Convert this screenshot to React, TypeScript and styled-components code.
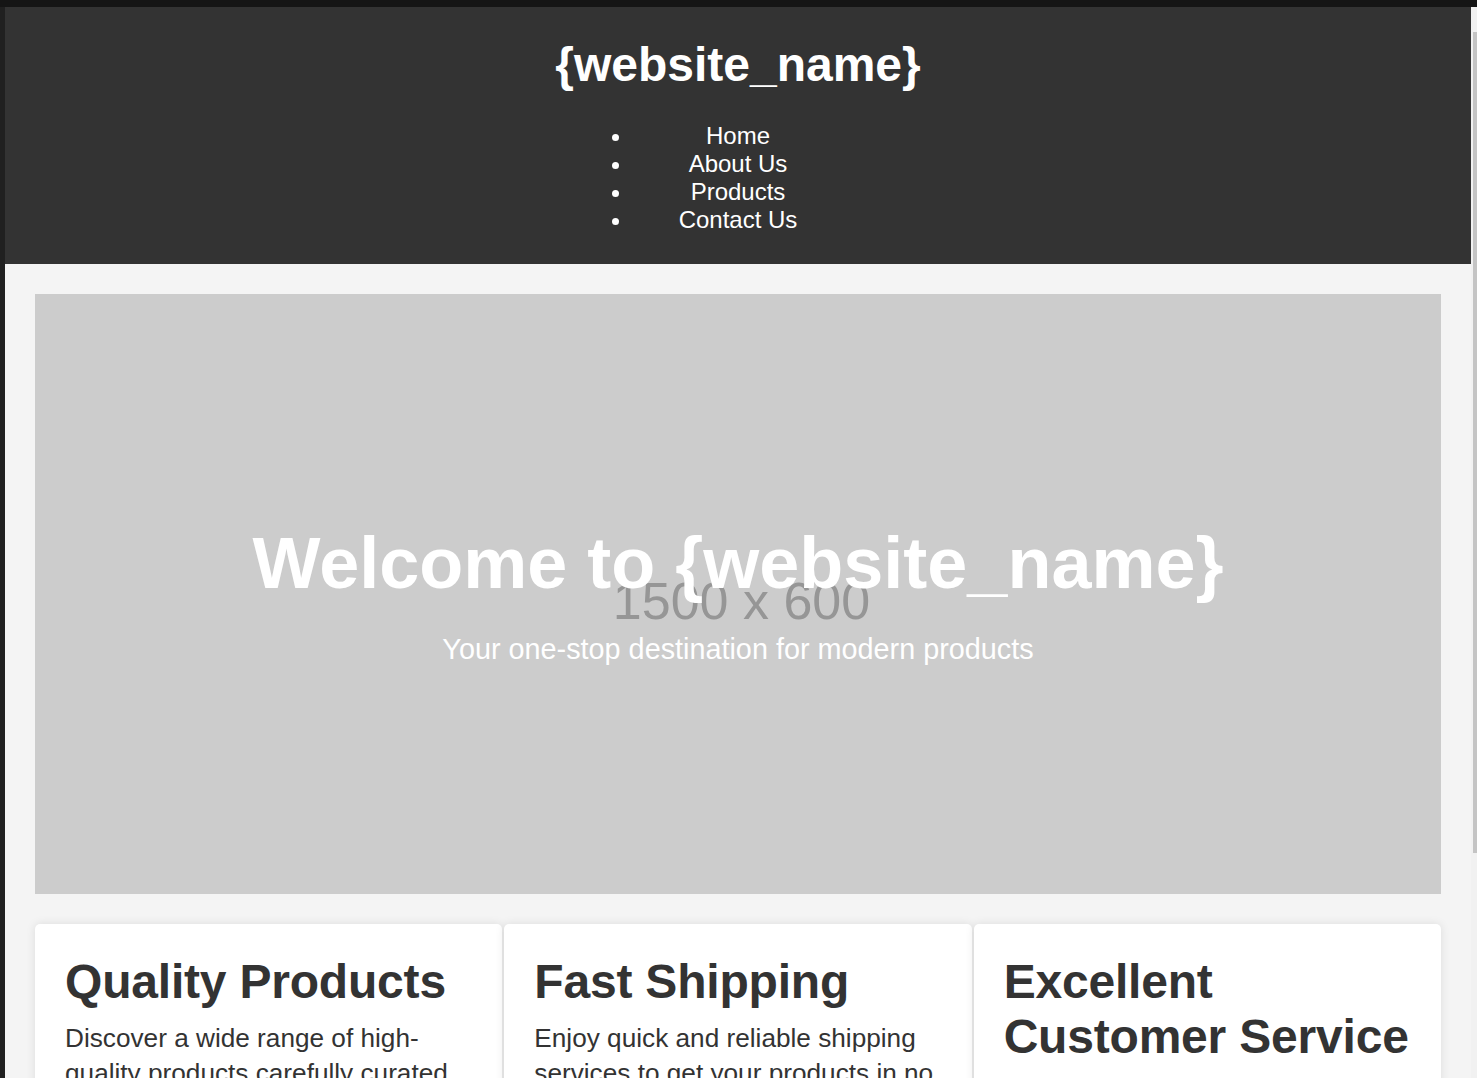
import React from "react";
import styled, { createGlobalStyle } from "styled-components";

const GlobalStyle = createGlobalStyle`
  html, body {
    margin: 0;
    padding: 0;
    background: #151515;
  }
  body {
    font-family: "Liberation Sans", Arial, Helvetica, sans-serif;
  }
  * {
    box-sizing: border-box;
  }
`;

const Screen = styled.div`
  height: 1078px;
  padding-top: 7px;
  background: #151515;
  display: flex;
  flex-direction: column;
  overflow: hidden;
`;

const Window = styled.div`
  flex: 1;
  min-height: 0;
  display: flex;
  border-left: 5px solid #202020;
`;

const Page = styled.div`
  flex: 1;
  min-width: 0;
  overflow: hidden;
  background: #f4f4f4;
  color: #333;
`;

const ScrollRail = styled.div`
  width: 6px;
  flex: none;
  background: #f1f1f1;
  padding-top: 25px;
`;

const ScrollThumb = styled.div`
  height: 821px;
  margin-left: 2px;
  background: #c4c4c4;
`;

const Header = styled.header`
  background: #333;
  color: #fff;
  text-align: center;
  padding: 30px 0 30px;
`;

const SiteTitle = styled.h1`
  margin: 0 0 30px;
  font-size: 48px;
  font-weight: 700;
  line-height: normal;
`;

const NavList = styled.ul`
  list-style: disc outside;
  width: 210px;
  margin: 0 auto;
  padding: 0;
`;

const NavItem = styled.li`
  font-size: 24px;
  line-height: normal;
  text-align: center;
`;

const NavLink = styled.a`
  color: #fff;
  text-decoration: none;
`;

const Main = styled.main`
  padding: 30px;
  background: #f4f4f4;
`;

const Hero = styled.section`
  height: 600px;
  background: #ccc;
  display: grid;
  place-items: center;
`;

const Placeholder = styled.span`
  grid-area: 1 / 1;
  padding: 14px 0 0 7px;
  font-size: 52px;
  line-height: normal;
  color: #969696;
`;

const HeroContent = styled.div`
  grid-area: 1 / 1;
  text-align: center;
  color: #fff;
`;

const HeroTitle = styled.h2`
  margin: 0 0 29px;
  font-size: 72px;
  font-weight: 700;
  line-height: normal;
`;

const HeroText = styled.p`
  margin: 0;
  font-size: 28.8px;
  line-height: normal;
`;

const Features = styled.section`
  margin-top: 30px;
  display: grid;
  grid-template-columns: repeat(3, 1fr);
  gap: 2px;
`;

const Card = styled.article`
  background: #fff;
  border-radius: 5px;
  padding: 30px;
  box-shadow: 0 0 10px rgba(0, 0, 0, 0.1);
  color: #333;
`;

const CardTitle = styled.h3`
  margin: 0 0 12px;
  font-size: 48px;
  font-weight: 700;
  line-height: normal;
  letter-spacing: -0.2px;
`;

const CardText = styled.p`
  margin: 0;
  font-size: 26.2px;
  line-height: 35px;
`;

const Footer = styled.footer`
  background: #333;
  color: #fff;
  text-align: center;
  padding: 20px;
  font-size: 18px;
`;

const navItems = ["Home", "About Us", "Products", "Contact Us"];

const features = [
  {
    title: "Quality Products",
    text: "Discover a wide range of high-quality products carefully curated to meet your needs.",
  },
  {
    title: "Fast Shipping",
    text: "Enjoy quick and reliable shipping services to get your products in no time.",
  },
  {
    title: "Excellent Customer Service",
    text: "Our dedicated support team is here to assist you with any questions or concerns.",
  },
];

export default function App() {
  return (
    <>
      <GlobalStyle />
      <Screen>
        <Window>
          <Page>
            <Header>
              <SiteTitle>{"{website_name}"}</SiteTitle>
              <nav>
                <NavList>
                  {navItems.map((item) => (
                    <NavItem key={item}>
                      <NavLink href="#">{item}</NavLink>
                    </NavItem>
                  ))}
                </NavList>
              </nav>
            </Header>
            <Main>
              <Hero>
                <Placeholder>1500 x 600</Placeholder>
                <HeroContent>
                  <HeroTitle>{"Welcome to {website_name}"}</HeroTitle>
                  <HeroText>Your one-stop destination for modern products</HeroText>
                </HeroContent>
              </Hero>
              <Features>
                {features.map((f) => (
                  <Card key={f.title}>
                    <CardTitle>{f.title}</CardTitle>
                    <CardText>{f.text}</CardText>
                  </Card>
                ))}
              </Features>
            </Main>
            <Footer>{"© 2024 {website_name}. All rights reserved."}</Footer>
          </Page>
          <ScrollRail>
            <ScrollThumb />
          </ScrollRail>
        </Window>
      </Screen>
    </>
  );
}
